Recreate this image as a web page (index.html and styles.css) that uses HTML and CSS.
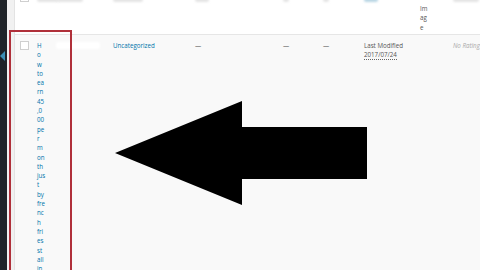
FILE: index.html
```html
<!DOCTYPE html>
<html>
<head>
<meta charset="utf-8">
<link rel="stylesheet" href="styles.css">
</head>
<body>
<div class="page">
  <div class="sidebar"><span class="current"></span></div>
  <div class="gutter"></div>
  <div class="table">
    <div class="row head">
      <div class="cell cb"><span class="box"></span></div>
      <div class="cell"><span class="blur hb1"></span></div>
      <div class="cell"><span class="blur hb2"></span></div>
      <div class="cell"><span class="blur hb3"></span></div>
      <div class="cell"><span class="blur hb4"></span></div>
      <div class="cell"><span class="blur hb5"></span></div>
      <div class="cell"><span class="blur hb5"></span></div>
      <div class="cell"><span class="blur hb6"></span></div>
      <div class="cell feat"><span class="fline">Im</span><span class="fline">ag</span><span class="fline">e</span></div>
      <div class="cell"><span class="blur hb7"></span></div>
    </div>
    <div class="row body">
      <div class="cell cb"><span class="box"></span></div>
      <div class="cell title">H<br>o<br>w<br>to<br>ea<br>rn<br>45<br>,0<br>00<br>pe<br>r<br>m<br>on<br>th<br>jus<br>t<br>by<br>fre<br>nc<br>h<br>fri<br>es<br>st<br>all<br>in</div>
      <div class="cell"><span class="blur author"></span></div>
      <div class="cell link">Uncategorized</div>
      <div class="cell dash">—</div>
      <div class="cell dash">—</div>
      <div class="cell dash">—</div>
      <div class="cell date">Last Modified<br><span class="abbr">2017/07/24</span></div>
      <div class="cell"></div>
      <div class="cell rating">No Rating</div>
    </div>
  </div>
  <div class="highlight"></div>
  <svg class="arrow" width="480" height="270" viewBox="0 0 480 270">
    <polygon points="115,153 242,101 242,127 367,127 367,179 242,179 242,205" fill="#000"/>
  </svg>
</div>
</body>
</html>
```
FILE: styles.css
```css
html, body {
  margin: 0;
  padding: 0;
  width: 480px;
  height: 270px;
  overflow: hidden;
  background: #f1f1f1;
  font-family: "Open Sans", "Noto Sans", sans-serif;
  font-size: 6.2px;
  color: #555;
}
.page {
  position: relative;
  display: flex;
  width: 480px;
  height: 270px;
  overflow: hidden;
}
.sidebar {
  width: 7px;
  flex: none;
  background: #1f2429;
  position: relative;
}
.current {
  position: absolute;
  left: 0;
  top: 51px;
  width: 0;
  height: 0;
  border-top: 5px solid transparent;
  border-bottom: 5px solid transparent;
  border-right: 5px solid #3d8fb5;
}
.gutter {
  width: 7px;
  flex: none;
  background: #f1f1f1;
}
.table {
  flex: none;
  width: 520px;
  border-left: 1px solid #e3e3e3;
  display: flex;
  flex-direction: column;
}
.row {
  display: grid;
  grid-template-columns: 18px 20px 56px 82px 88px 40px 41px 53px 36px 66px;
}
.head {
  height: 34px;
  flex: none;
  background: #fff;
  border-bottom: 1px solid #e6e6e6;
  overflow: hidden;
}
.body {
  flex: 1;
  background: #f9f9f9;
}
.cell {
  padding-left: 4px;
  line-height: 9.3px;
}
.body .cell {
  padding-top: 6px;
}
.cb {
  padding-left: 5px;
}
.box {
  display: block;
  width: 7px;
  height: 7px;
  border: 1px solid #cfcfcf;
  background: #fff;
}
.head .cb .box {
  margin-top: -7px;
}
.feat {
  display: flex;
  flex-direction: column;
  padding-left: 7px;
  padding-top: 4px;
  color: #555;
}
.fline {
  display: block;
}
.blur {
  display: block;
  height: 5px;
  margin-top: -3px;
  background: #fff;
  filter: blur(1.2px);
  border-radius: 2px;
}
.head .blur { background: #e4e4e4; }
.hb1 { width: 22px; }
.hb2 { width: 26px; }
.hb3 { width: 30px; }
.hb4 { width: 14px; }
.hb5 { width: 6px; }
.hb6 { width: 14px; background: #b9d6e4 !important; }
.hb7 { width: 26px; }
.author {
  width: 44px;
  height: 7px;
  margin-top: 1px;
  margin-left: -1px;
}
.title {
  color: #0073aa;
}
.link {
  color: #0073aa;
}
.dash {
  color: #555;
}
.date {
  color: #555;
}
.abbr {
  border-bottom: 1px dotted #666;
}
.rating {
  color: #aaa;
  font-style: italic;
}
.highlight {
  position: absolute;
  left: 9px;
  top: 30px;
  width: 59px;
  height: 260px;
  border: 2px solid #b0303a;
}
.arrow {
  position: absolute;
  left: 0;
  top: 0;
}
```
